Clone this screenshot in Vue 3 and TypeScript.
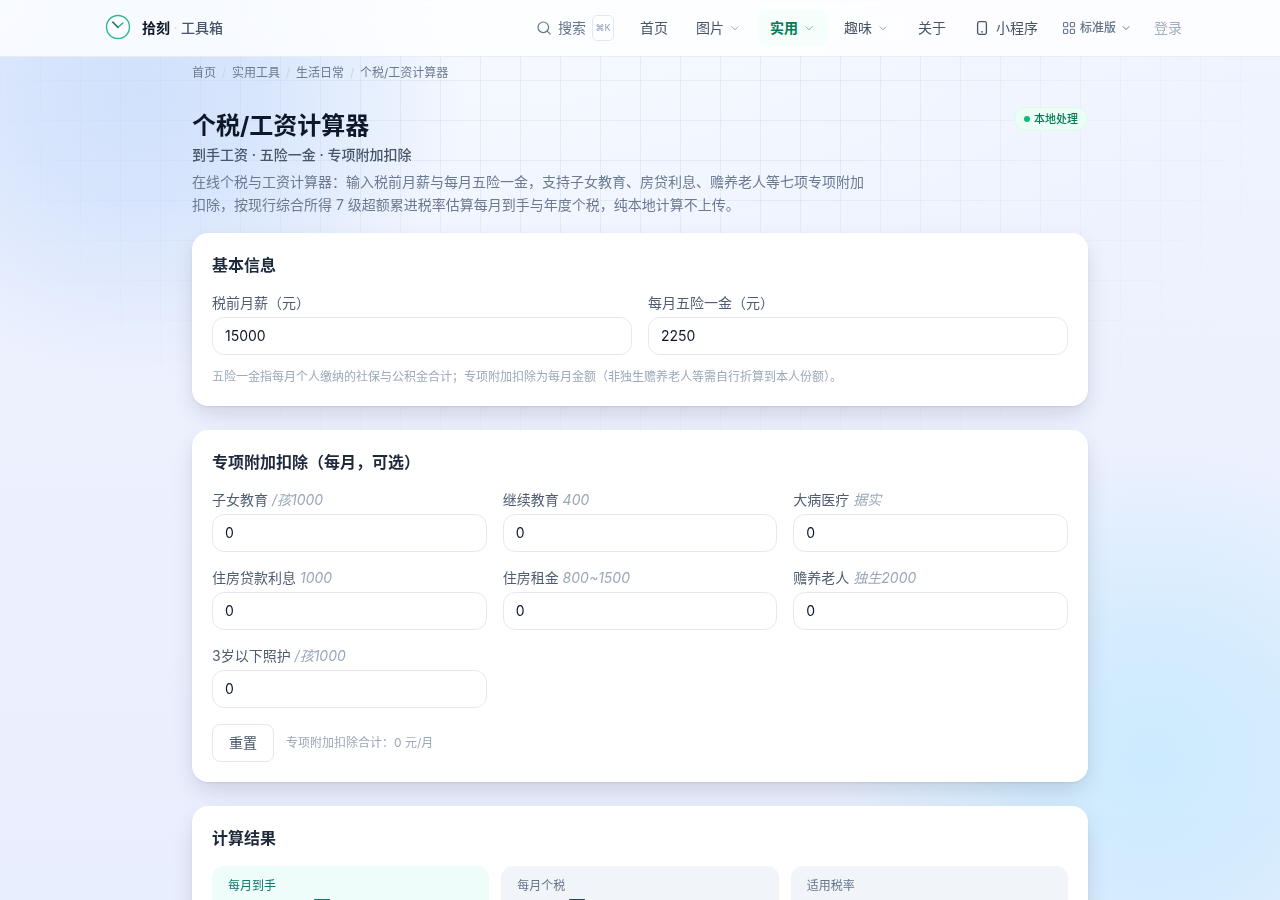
<script setup lang="ts">
import { computed, reactive, ref } from 'vue'

interface NavItem {
  label: string
  menu: boolean
  active?: boolean
}

interface Deduction {
  id: string
  label: string
  hint: string
}

const navItems: NavItem[] = [
  { label: '首页', menu: false },
  { label: '图片', menu: true },
  { label: '实用', menu: true, active: true },
  { label: '趣味', menu: true },
  { label: '关于', menu: false },
]

const crumbs: string[] = ['首页', '实用工具', '生活日常']

const deductions: Deduction[] = [
  { id: 'child', label: '子女教育', hint: '/孩1000' },
  { id: 'study', label: '继续教育', hint: '400' },
  { id: 'illness', label: '大病医疗', hint: '据实' },
  { id: 'mortgage', label: '住房贷款利息', hint: '1000' },
  { id: 'rent', label: '住房租金', hint: '800~1500' },
  { id: 'elder', label: '赡养老人', hint: '独生2000' },
  { id: 'infant', label: '3岁以下照护', hint: '/孩1000' },
]

const salary = ref('15000')
const insurance = ref('2250')
const amounts = reactive<Record<string, string>>(
  Object.fromEntries(deductions.map((d) => [d.id, '0'])),
)

const brackets: [number, number, number][] = [
  [36000, 3, 0],
  [144000, 10, 2520],
  [300000, 20, 16920],
  [420000, 25, 31920],
  [660000, 30, 52920],
  [960000, 35, 85920],
  [Infinity, 45, 181920],
]

const num = (v: string): number => Number(v) || 0
const total = computed(() => deductions.reduce((s, d) => s + num(amounts[d.id]), 0))
const taxable = computed(() =>
  Math.max(0, (num(salary.value) - num(insurance.value) - 5000 - total.value) * 12),
)
const bracket = computed(() => brackets.find((b) => taxable.value <= b[0])!)
const tax = computed(() => (taxable.value * bracket.value[1] / 100 - bracket.value[2]) / 12)
const takeHome = computed(() => num(salary.value) - num(insurance.value) - tax.value)
const money = (v: number): string => `${Math.round(v).toLocaleString('en-US')} 元`

const results = computed(() => [
  { label: '每月到手', value: money(takeHome.value), primary: true },
  { label: '每月个税', value: money(tax.value), primary: false },
  { label: '适用税率', value: `${bracket.value[1]}%`, primary: false },
])

function reset(): void {
  deductions.forEach((d) => { amounts[d.id] = '0' })
}
</script>

<template>
  <div class="page">
    <div class="backdrop" aria-hidden="true"><div class="grid-lines"></div></div>

    <header class="topbar">
      <div class="topbar-inner">
        <a class="brand" href="#">
          <svg class="logo" width="28" height="28" viewBox="0 0 28 28" fill="none" aria-hidden="true">
            <circle cx="14" cy="13" r="11.5" fill="#fff" stroke="#2bb795" stroke-width="1.4" />
            <path d="M14 13.3 18.8 9.1" stroke="#2bb795" stroke-width="1.5" stroke-linecap="round" />
            <path d="M14 13.3 8.8 8.1" stroke="#35766f" stroke-width="1.7" stroke-linecap="round" />
          </svg>
          <span class="brand-name">拾刻</span>
          <span class="brand-dot">·</span>
          <span class="brand-sub">工具箱</span>
        </a>
        <nav class="nav">
          <button class="search" type="button">
            <svg width="16" height="16" viewBox="0 0 16 16" fill="none" stroke="currentColor" stroke-width="1.2" stroke-linecap="round" aria-hidden="true">
              <circle cx="7.3" cy="7.3" r="5.3" />
              <path d="m11.2 11.2 3 3" />
            </svg>
            <span>搜索</span>
            <kbd>⌘K</kbd>
          </button>
          <a v-for="item in navItems" :key="item.label" class="nav-link" :class="{ active: item.active }" href="#">
            <span>{{ item.label }}</span>
            <svg v-if="item.menu" class="chevron" width="14" height="14" viewBox="0 0 14 14" fill="none" stroke="currentColor" stroke-linecap="round" stroke-linejoin="round" aria-hidden="true">
              <path d="m4 5.8 3 3 3-3" />
            </svg>
          </a>
          <a class="nav-link mini" href="#">
            <svg width="16" height="16" viewBox="0 0 16 16" fill="none" stroke="currentColor" stroke-width="1.3" stroke-linecap="round" aria-hidden="true">
              <rect x="3.6" y="1.7" width="8.8" height="12.6" rx="1.7" />
              <path d="M7.5 11.8h1" />
            </svg>
            <span>小程序</span>
          </a>
          <button class="edition" type="button">
            <svg width="14" height="14" viewBox="0 0 14 14" fill="none" stroke="currentColor" stroke-width="1.1" aria-hidden="true">
              <rect x="1.5" y="1.5" width="4.2" height="4.2" rx="1" />
              <rect x="8.3" y="1.5" width="4.2" height="4.2" rx="1" />
              <rect x="1.5" y="8.3" width="4.2" height="4.2" rx="1" />
              <rect x="8.3" y="8.3" width="4.2" height="4.2" rx="1" />
            </svg>
            <span>标准版</span>
            <svg width="12" height="12" viewBox="0 0 12 12" fill="none" stroke="currentColor" stroke-linecap="round" stroke-linejoin="round" aria-hidden="true">
              <path d="m3 4.6 3 3 3-3" />
            </svg>
          </button>
          <a class="login" href="#">登录</a>
        </nav>
      </div>
    </header>

    <main class="content">
      <nav class="crumbs" aria-label="面包屑">
        <template v-for="c in crumbs" :key="c">
          <a href="#">{{ c }}</a><span class="slash">/</span>
        </template>
        <span>个税/工资计算器</span>
      </nav>

      <div class="heading">
        <div class="heading-text">
          <h1>个税/工资计算器</h1>
          <p class="subtitle">到手工资 · 五险一金 · 专项附加扣除</p>
          <p class="intro">在线个税与工资计算器：输入税前月薪与每月五险一金，支持子女教育、房贷利息、赡养老人等七项专项附加扣除，按现行综合所得 7 级超额累进税率估算每月到手与年度个税，纯本地计算不上传。</p>
        </div>
        <span class="badge"><i class="badge-dot"></i>本地处理</span>
      </div>

      <div class="cards">
        <section class="card">
          <h2>基本信息</h2>
          <div class="fields two">
            <div class="field">
              <label for="salary">税前月薪（元）</label>
              <input id="salary" v-model="salary" type="text" inputmode="decimal" />
            </div>
            <div class="field">
              <label for="insurance">每月五险一金（元）</label>
              <input id="insurance" v-model="insurance" type="text" inputmode="decimal" />
            </div>
          </div>
          <p class="note">五险一金指每月个人缴纳的社保与公积金合计；专项附加扣除为每月金额（非独生赡养老人等需自行折算到本人份额）。</p>
        </section>

        <section class="card">
          <h2>专项附加扣除（每月，可选）</h2>
          <div class="fields three">
            <div v-for="d in deductions" :key="d.id" class="field">
              <label :for="d.id">{{ d.label }} <em>{{ d.hint }}</em></label>
              <input :id="d.id" v-model="amounts[d.id]" type="text" inputmode="decimal" />
            </div>
          </div>
          <div class="actions">
            <button class="reset" type="button" @click="reset">重置</button>
            <span class="total">专项附加扣除合计：{{ total }} 元/月</span>
          </div>
        </section>

        <section class="card">
          <h2>计算结果</h2>
          <div class="results">
            <div v-for="r in results" :key="r.label" class="tile" :class="{ primary: r.primary }">
              <span class="tile-label">{{ r.label }}</span>
              <strong>{{ r.value }}</strong>
            </div>
          </div>
        </section>
      </div>
    </main>
  </div>
</template>

<style>
body {
  margin: 0;
  background: #eef1fe;
}
</style>

<style scoped>
* {
  box-sizing: border-box;
}

.page {
  position: relative;
  min-height: 100vh;
  font-family: Inter, 'Noto Sans CJK SC', sans-serif;
  font-size: 14px;
  line-height: 20px;
  color: #0f172a;
}

a {
  color: inherit;
  text-decoration: none;
}

button,
input,
kbd {
  font: inherit;
}

button {
  padding: 0;
  border: 0;
  background: none;
  color: inherit;
  cursor: pointer;
}

h1,
h2,
p {
  margin: 0;
}

.backdrop {
  position: fixed;
  inset: 0;
  background:
    radial-gradient(ellipse 320px 290px at 11% 10%, rgba(191, 214, 250, 0.65), rgba(191, 214, 250, 0.5) 40%, rgba(191, 214, 250, 0) 100%),
    radial-gradient(ellipse 320px 310px at 90% 84%, rgba(190, 233, 254, 0.66), rgba(190, 233, 254, 0.5) 42%, rgba(190, 228, 254, 0) 100%),
    radial-gradient(ellipse 60% 40% at 40% 0%, rgba(246, 250, 255, 0.9), rgba(246, 250, 255, 0)),
    linear-gradient(180deg, #f0f4ff 0%, #edf1fe 45%, #e9eefe 100%);
}

.grid-lines {
  height: 100%;
  background-image:
    linear-gradient(to right, rgba(100, 116, 160, 0.09) 1px, transparent 1px),
    linear-gradient(to bottom, rgba(100, 116, 160, 0.09) 1px, transparent 1px);
  background-size: 40px 40px;
  mask-image: radial-gradient(ellipse 55% 65% at 50% 0%, #000 35%, transparent 100%);
}

.topbar {
  position: sticky;
  top: 0;
  z-index: 5;
  background: rgba(255, 255, 255, 0.8);
  border-bottom: 1px solid #e6edf5;
  backdrop-filter: blur(12px);
}

.topbar-inner {
  display: flex;
  align-items: center;
  justify-content: space-between;
  max-width: 1108px;
  height: 56px;
  margin: 0 auto;
}

.brand {
  display: flex;
  align-items: center;
  padding-left: 18px;
}

.logo {
  margin-right: 10px;
}

.brand-name {
  font-weight: 700;
}

.brand-dot {
  width: 11px;
  text-align: center;
  color: #cbd5e1;
}

.brand-sub {
  font-weight: 500;
  color: #475569;
}

.nav {
  display: flex;
  align-items: center;
  gap: 4px;
  color: #475569;
}

.search {
  display: flex;
  align-items: center;
  gap: 6px;
  margin-right: 10px;
  color: #64748b;
}

.search kbd {
  width: 22px;
  height: 26px;
  border: 1px solid #e2e8f0;
  border-radius: 5px;
  font-size: 9px;
  line-height: 24px;
  text-align: center;
  color: #94a3b8;
}

.nav-link {
  display: flex;
  align-items: center;
  gap: 4px;
  padding: 8px 12px;
  border-radius: 10px;
}

.nav-link.active {
  background: #f6fefb;
  color: #047857;
  font-weight: 700;
}

.nav-link.mini {
  gap: 6px;
}

.chevron {
  color: #94a3b8;
}

.nav-link.active .chevron {
  color: #6fb5a0;
}

.edition {
  display: flex;
  align-items: center;
  gap: 4px;
  padding: 8px 6px 8px 8px;
  font-size: 12px;
  font-weight: 500;
  color: #64748b;
}

.login {
  padding: 8px 12px;
  color: #a3afc0;
}

.content {
  position: relative;
  max-width: 896px;
  margin: 0 auto;
  padding: 8px 0 40px;
}

.crumbs {
  display: flex;
  font-size: 12px;
  line-height: 16px;
  color: #6b7a90;
}

.slash {
  width: 16px;
  text-align: center;
  color: #cbd5e1;
}

.heading {
  display: flex;
  align-items: flex-start;
  justify-content: space-between;
  margin: 26px 0 17px;
}

.heading-text {
  max-width: 672px;
}

h1 {
  font-size: 24px;
  line-height: 38px;
  font-weight: 700;
}

.subtitle {
  font-weight: 500;
  color: #475569;
}

.intro {
  margin-top: 5px;
  line-height: 23px;
  color: #6b7a90;
}

.badge {
  display: flex;
  align-items: center;
  gap: 4px;
  height: 24px;
  padding: 0 9px;
  border: 1px solid #d9fbea;
  border-radius: 12px;
  background: #ecfdf5;
  color: #047857;
  font-size: 11px;
  font-weight: 500;
}

.badge-dot {
  width: 6px;
  height: 6px;
  border-radius: 50%;
  background: #10b981;
}

.cards {
  display: grid;
  gap: 24px;
}

.card {
  padding: 20px;
  border-radius: 16px;
  background: #fff;
  box-shadow:
    0 1px 2px rgba(15, 23, 42, 0.08),
    0 10px 24px -4px rgba(15, 23, 42, 0.16);
}

h2 {
  margin-bottom: 16px;
  font-size: 16px;
  line-height: 24px;
  font-weight: 700;
  color: #1e293b;
}

.fields {
  display: grid;
  gap: 16px;
}

.two {
  grid-template-columns: repeat(2, 1fr);
}

.three {
  grid-template-columns: repeat(3, 1fr);
}

.field {
  display: grid;
  gap: 4px;
  min-width: 0;
}

.field label {
  color: #4f5d72;
}

.field em {
  color: #9aa7b9;
}

.field input {
  width: 100%;
  height: 38px;
  padding: 0 12px 2px;
  border: 1px solid #e5e9ef;
  border-radius: 12px;
  background: #fff;
  color: #0f172a;
}

.note {
  margin-top: 12px;
  font-size: 12px;
  line-height: 19px;
  color: #9ca8b9;
}

.actions {
  display: flex;
  align-items: center;
  gap: 12px;
  margin-top: 16px;
}

.reset {
  width: 62px;
  height: 38px;
  border: 1px solid #e2e8f0;
  border-radius: 8px;
  background: #fff;
  color: #475569;
}

.total {
  font-size: 12px;
  color: #9ca8b9;
}

.results {
  display: grid;
  grid-template-columns: repeat(3, 1fr);
  gap: 12px;
}

.tile {
  display: grid;
  padding: 12px 16px 16px;
  border-radius: 12px;
  background: #f1f5f9;
  color: #64748b;
}

.tile-label {
  font-size: 12px;
  line-height: 16px;
}

.tile strong {
  font-size: 22px;
  font-variant-numeric: tabular-nums;
  line-height: 28px;
  color: #334155;
}

.tile.primary {
  background: #effdfa;
  color: #0f766e;
}

.tile.primary strong {
  color: #0f766e;
}
</style>
